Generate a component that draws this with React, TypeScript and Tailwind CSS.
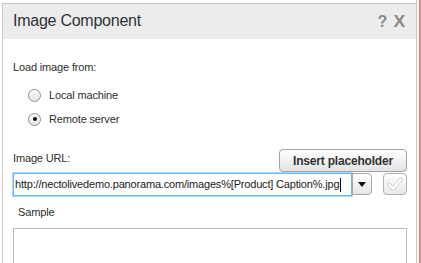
import React from "react";

const font = { fontFamily: '"Liberation Sans", Arial, sans-serif' };

function Radio({ checked, label }: { checked?: boolean; label: string }) {
  return (
    <div className="flex h-[24px] items-center">
      <div className="ml-[15px] flex h-[13px] w-[13px] items-center justify-center rounded-full border border-[#8e8e8e] bg-gradient-to-b from-[#ffffff] to-[#e4e4e4]">
        {checked && <div className="h-[4px] w-[4px] rounded-full bg-[#111]" />}
      </div>
      <span className="ml-[8px] text-[11px] leading-[13px] tracking-[-0.15px] text-[#2e2e2e]">{label}</span>
    </div>
  );
}

export default function App() {
  return (
    <div className="flex h-[263px] w-[421px] overflow-hidden bg-white" style={font}>
      <div className="h-[263px] w-[417px] border-r border-[#c9c9c9] pl-[2px] pt-[3px]">
        <div className="h-full border-l border-t border-[#c9c9c9]">
          <div className="flex h-[35px] items-start justify-between bg-[#ececec] pl-[10px] pr-[11px] pt-[8px]">
            <span className="text-[16px] leading-[18px] tracking-[-0.25px] text-[#2e3338]">Image Component</span>
            <div className="flex items-center pt-[1px] text-[16px] font-bold leading-[18px] text-[#8a8a8a]">
              <span>?</span>
              <span className="ml-[7px] scale-x-110">X</span>
            </div>
          </div>
          <div className="flex flex-col pl-[10px] pr-[9px] pt-[22px]">
            <div className="text-[11px] leading-[13px] tracking-[-0.15px] text-[#2e2e2e]">Load image from:</div>
            <div className="mt-[9px] flex flex-col">
              <Radio label="Local machine" />
              <Radio checked label="Remote server" />
            </div>
            <div className="mt-[18px] flex h-[23px] items-center justify-between">
              <span className="mb-[4px] text-[11px] leading-[13px] tracking-[-0.15px] text-[#2e2e2e]">Image URL:</span>
              <button className="flex h-[23px] w-[128px] items-center justify-center rounded-[4px] border border-[#a3a3a3] bg-gradient-to-b from-[#ffffff] to-[#e3e3e3] text-[12px] font-bold leading-[14px] tracking-[-0.2px] text-[#333]">
                Insert placeholder
              </button>
            </div>
            <div className="mt-[1px] flex items-start">
              <div className="flex h-[23px] w-[340px] items-center border border-[#6db8f0] bg-white pl-[1px] shadow-[0_0_0_1px_#a9d7fb]">
                <span className="whitespace-nowrap text-[11px] leading-[13px] tracking-[-0.18px] text-[#222]">
                  http://nectolivedemo.panorama.com/images%[Product] Caption%.jpg
                </span>
                <span className="ml-[1px] h-[14px] w-[1px] bg-[#111]" />
              </div>
              <div className="flex h-[22px] w-[20px] items-center justify-center rounded-r-[4px] border border-[#a8a8a8] bg-gradient-to-b from-[#ffffff] to-[#e6e6e6]">
                <svg width="8" height="5" viewBox="0 0 8 5">
                  <path d="M0 0 L8 0 L4 5 Z" fill="#111" />
                </svg>
              </div>
              <div className="ml-[11px] flex h-[22px] w-[24px] items-center justify-center rounded-[4px] border border-[#b0b0b0] bg-gradient-to-b from-[#ffffff] to-[#e8e8e8]">
                <svg width="16" height="14" viewBox="0 0 16 14">
                  <path d="M2 7.5 L6 11.5 L14 2.5" fill="none" stroke="#d2d2d2" strokeWidth="4" strokeLinecap="round" strokeLinejoin="round" />
                  <path d="M2 7.5 L6 11.5 L14 2.5" fill="none" stroke="#ffffff" strokeWidth="2" strokeLinecap="round" strokeLinejoin="round" />
                </svg>
              </div>
            </div>
            <div className="mt-[10px] pl-[5px] text-[11px] leading-[13px] tracking-[-0.15px] text-[#2e2e2e]">Sample</div>
            <div className="mt-[9px] h-[80px] border border-[#bcbcbc]" />
          </div>
        </div>
      </div>
      <div className="ml-[2px] h-[263px] w-[2px] bg-[#f08282]" />
    </div>
  );
}
